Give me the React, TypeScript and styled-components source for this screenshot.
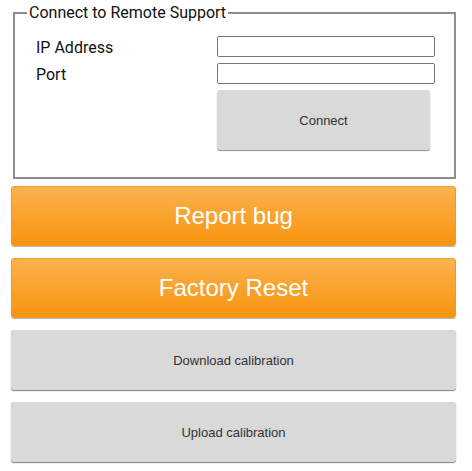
import React from 'react';
import styled, { createGlobalStyle } from 'styled-components';

const GlobalStyle = createGlobalStyle`
  body {
    margin: 0;
    background: #ffffff;
    font-family: Roboto, "Liberation Sans", sans-serif;
  }
`;

const Page = styled.div`
  width: 472px;
  padding: 3px 16px 0 11px;
  box-sizing: border-box;
  display: flex;
  flex-direction: column;
`;

const Fieldset = styled.fieldset`
  margin: 0 0 7px 2px;
  padding: 0;
  border: 2px solid #8e8e8e;
  min-width: 0;
`;

const Legend = styled.legend`
  margin-left: 12px;
  padding: 0 2px;
  font-family: Roboto, sans-serif;
  font-size: 16px;
  line-height: 19px;
  color: #111;
`;

const Form = styled.div`
  display: grid;
  grid-template-columns: 181px 218px;
  row-gap: 6px;
  align-items: center;
  padding: 14px 0 27px 21px;
`;

const Label = styled.label`
  height: 21px;
  line-height: 24px;
  font-family: Roboto, sans-serif;
  font-size: 16px;
  color: #111;
`;

const Input = styled.input`
  box-sizing: border-box;
  width: 218px;
  height: 21px;
  margin: 0;
  border: 1px solid #767676;
  border-radius: 2px;
  background: #fff;
  padding: 0 4px;
`;

const ConnectButton = styled.button`
  grid-column: 2;
  width: 213px;
  height: 60px;
  margin: 0;
  border: none;
  border-radius: 3px;
  background: #d9d9d9;
  box-shadow: 0 1px 1px rgba(0, 0, 0, 0.45);
  font-family: "Liberation Sans", Arial, sans-serif;
  font-size: 13px;
  color: #333;
`;

const ActionButton = styled.button<{ $primary?: boolean }>`
  box-sizing: border-box;
  width: 445px;
  height: 60px;
  margin: 0 0 12px 0;
  border-radius: 3px;
  font-family: "Liberation Sans", Arial, sans-serif;
  ${({ $primary }) =>
    $primary
      ? `
    border: 1px solid #ee9a2a;
    background: linear-gradient(to bottom, #fbb24f 0%, #f8940e 100%);
    box-shadow: 0 1px 1px rgba(0, 0, 0, 0.3);
    color: #ffffff;
    font-size: 24px;
  `
      : `
    border: none;
    background: #d9d9d9;
    box-shadow: 0 1px 1px rgba(0, 0, 0, 0.5);
    color: #333;
    font-size: 13px;
  `}
`;

const App: React.FC = () => {
  return (
    <>
      <GlobalStyle />
      <Page>
        <Fieldset>
          <Legend>Connect to Remote Support</Legend>
          <Form>
            <Label>IP Address</Label>
            <Input type="text" />
            <Label>Port</Label>
            <Input type="text" />
            <ConnectButton>Connect</ConnectButton>
          </Form>
        </Fieldset>
        <ActionButton $primary>Report bug</ActionButton>
        <ActionButton $primary>Factory Reset</ActionButton>
        <ActionButton>Download calibration</ActionButton>
        <ActionButton>Upload calibration</ActionButton>
      </Page>
    </>
  );
};

export default App;
